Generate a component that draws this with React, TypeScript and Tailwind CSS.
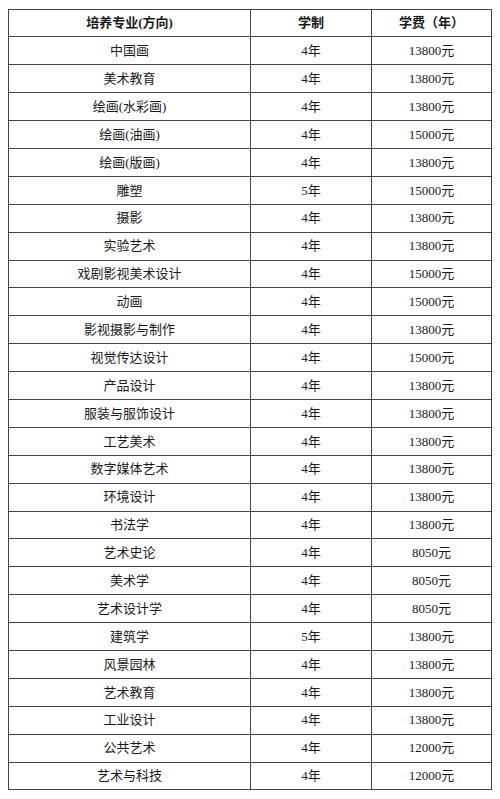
const rows: [string, string, string][] = [
  ["中国画", "4年", "13800元"],
  ["美术教育", "4年", "13800元"],
  ["绘画(水彩画)", "4年", "13800元"],
  ["绘画(油画)", "4年", "15000元"],
  ["绘画(版画)", "4年", "13800元"],
  ["雕塑", "5年", "15000元"],
  ["摄影", "4年", "13800元"],
  ["实验艺术", "4年", "13800元"],
  ["戏剧影视美术设计", "4年", "15000元"],
  ["动画", "4年", "15000元"],
  ["影视摄影与制作", "4年", "13800元"],
  ["视觉传达设计", "4年", "15000元"],
  ["产品设计", "4年", "13800元"],
  ["服装与服饰设计", "4年", "13800元"],
  ["工艺美术", "4年", "13800元"],
  ["数字媒体艺术", "4年", "13800元"],
  ["环境设计", "4年", "13800元"],
  ["书法学", "4年", "13800元"],
  ["艺术史论", "4年", "8050元"],
  ["美术学", "4年", "8050元"],
  ["艺术设计学", "4年", "8050元"],
  ["建筑学", "5年", "13800元"],
  ["风景园林", "4年", "13800元"],
  ["艺术教育", "4年", "13800元"],
  ["工业设计", "4年", "13800元"],
  ["公共艺术", "4年", "12000元"],
  ["艺术与科技", "4年", "12000元"],
]

export default function App() {
  const cell = "border-[1.5px] border-[#444] text-center align-middle p-0"

  return (
    <div className="bg-white w-[500px] h-[799px] pt-[8.5px] pl-[8px] font-['Liberation_Serif','Noto_Sans_CJK_SC',serif] text-[13px] text-[#1a1a1a]">
      <table className="border-collapse table-fixed w-[483px]">
        <colgroup>
          <col className="w-[242px]" />
          <col className="w-[121px]" />
          <col className="w-[120px]" />
        </colgroup>
        <thead>
          <tr className="h-[27.9px] font-bold">
            <th className={cell}>培养专业(方向)</th>
            <th className={cell}>学制</th>
            <th className={cell}>学费（年）</th>
          </tr>
        </thead>
        <tbody>
          {rows.map(([name, years, fee]) => (
            <tr key={name} className="h-[27.9px]">
              <td className={cell}>{name}</td>
              <td className={cell}>{years}</td>
              <td className={cell}>{fee}</td>
            </tr>
          ))}
        </tbody>
      </table>
    </div>
  )
}
